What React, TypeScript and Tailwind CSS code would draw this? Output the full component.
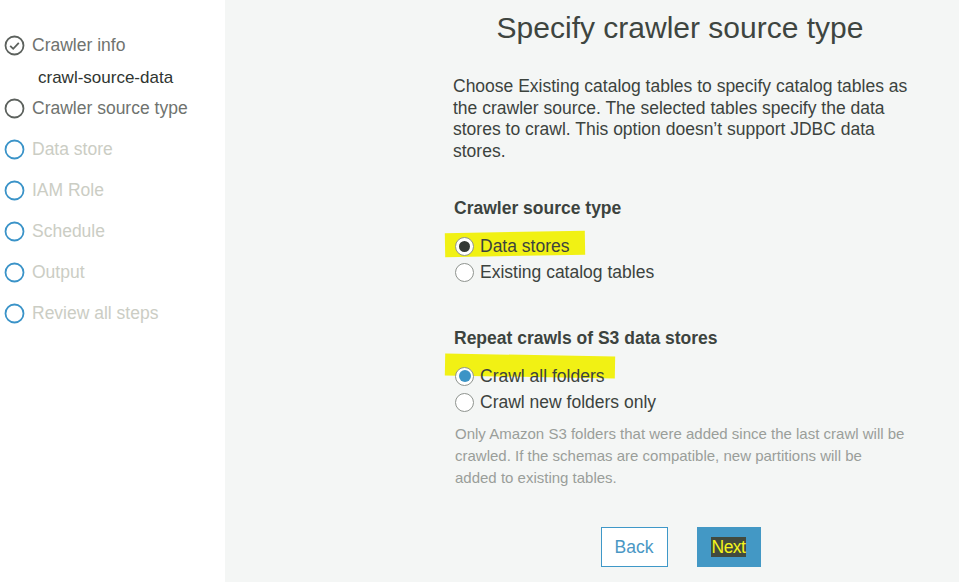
import React from 'react';

const steps = ['Data store', 'IAM Role', 'Schedule', 'Output', 'Review all steps'];

const StepCircle: React.FC<{ color: string; check?: boolean }> = ({ color, check }) => (
  <svg width="21" height="21" viewBox="0 0 21 21" className="shrink-0">
    <circle cx="10.5" cy="10.5" r="9" fill="none" stroke={color} strokeWidth="1.8" />
    {check && <path d="M6.2 10.8l3 3 5.6-6" fill="none" stroke={color} strokeWidth="1.8" />}
  </svg>
);

const Radio: React.FC<{ state?: 'dark' | 'blue' }> = ({ state }) => (
  <span className="relative z-10 w-[19px] h-[19px] rounded-full border border-[#8f948f] bg-white flex items-center justify-center shrink-0">
    {state === 'dark' && <span className="w-[11px] h-[11px] rounded-full bg-[#333834]" />}
    {state === 'blue' && <span className="w-[12px] h-[12px] rounded-full bg-[#3b94c6]" />}
  </span>
);

const Option: React.FC<{ label: string; state?: 'dark' | 'blue'; mark?: string }> = ({ label, state, mark }) => (
  <label className="relative flex items-center gap-[6px] h-[26px]">
    {mark && <span className={`absolute z-0 bg-[#f1f114] ${mark}`} />}
    <Radio state={state} />
    <span className="relative z-10">{label}</span>
  </label>
);

export default function App() {
  return (
    <div
      className="flex w-[959px] h-[582px] overflow-hidden bg-[#f4f6f5] text-[#3c433e]"
      style={{ fontFamily: '"Liberation Sans", Arial, sans-serif' }}
    >
      <aside className="w-[225px] shrink-0 bg-white pt-[34px] pl-[4px] text-[17.5px]">
        <div className="flex items-center gap-[7px] h-[22px]">
          <StepCircle color="#5c615d" check />
          <span className="text-[#6f736f]">Crawler info</span>
        </div>
        <div className="pl-[34px] mt-[9px] h-[22px] text-[17px] text-[#2f3531]">crawl-source-data</div>
        <div className="flex items-center gap-[7px] h-[22px] mt-[10px]">
          <StepCircle color="#5c615d" />
          <span className="text-[#6f736f]">Crawler source type</span>
        </div>
        <div className="flex flex-col gap-[19px] mt-[19px]">
          {steps.map((s) => (
            <div key={s} className="flex items-center gap-[7px] h-[22px]">
              <StepCircle color="#3a93c8" />
              <span className="text-[#cbcdc4]">{s}</span>
            </div>
          ))}
        </div>
      </aside>

      <main className="flex-1 pl-[228px]">
        <div className="w-[460px]">
          <h1 className="text-[30px] text-center text-[#3e4540] pt-[10px] pr-[6px] leading-[36px]">
            Specify crawler source type
          </h1>
          <p className="mt-[30px] text-[17.5px] leading-[21.5px]">
            Choose Existing catalog tables to specify catalog tables as the crawler source. The selected tables
            specify the data stores to crawl. This option doesn’t support JDBC data stores.
          </p>

          <h2 className="mt-[35px] text-[17.5px] font-bold leading-[22px] pl-[1px]">Crawler source type</h2>
          <div className="mt-[14px] text-[17.5px] pl-[2px]">
            <Option label="Data stores" state="dark" mark="-left-[10px] -top-[1px] w-[140px] h-[24px] -rotate-[1deg]" />
            <Option label="Existing catalog tables" />
          </div>

          <h2 className="mt-[42px] text-[17.5px] font-bold leading-[22px] pl-[1px]">Repeat crawls of S3 data stores</h2>
          <div className="mt-[14px] text-[17.5px] pl-[2px]">
            <Option label="Crawl all folders" state="blue" mark="-left-[10px] -top-[8px] w-[170px] h-[22px] rotate-[1deg]" />
            <Option label="Crawl new folders only" />
          </div>
          <p className="mt-[8px] pl-[2px] w-[452px] text-[15px] leading-[22px] text-[#9a9e9a]">
            Only Amazon S3 folders that were added since the last crawl will be crawled. If the schemas are
            compatible, new partitions will be added to existing tables.
          </p>

          <div className="flex justify-center gap-[29px] mt-[38px] pr-[5px]">
            <button className="w-[67px] h-[40px] border border-[#3f98c8] bg-white text-[#4a97c4] text-[17.5px]">
              Back
            </button>
            <button className="w-[64px] h-[40px] bg-[#4398c5] flex items-center justify-center">
              <span className="bg-[#424a3e] text-[#f4f41c] text-[17.5px] leading-[20px] px-[1px] tracking-[-0.5px]">
                Next
              </span>
            </button>
          </div>
        </div>
      </main>
    </div>
  );
}
